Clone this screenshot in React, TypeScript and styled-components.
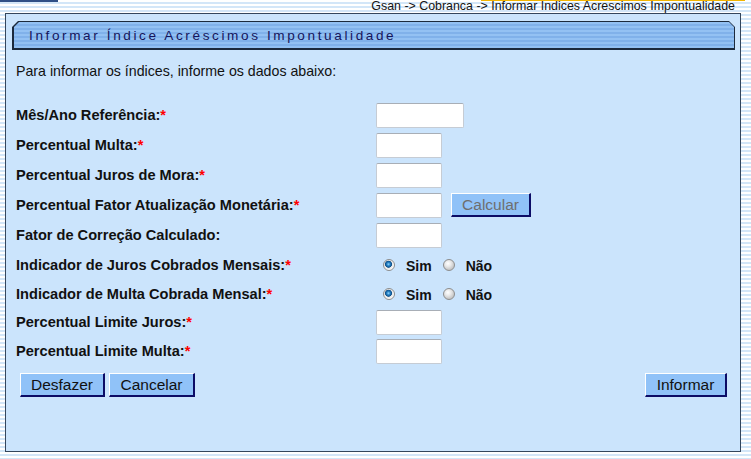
import React from "react";
import styled, { createGlobalStyle } from "styled-components";

const Global = createGlobalStyle`
  html, body { margin: 0; padding: 0; }
  body {
    width: 751px;
    height: 459px;
    overflow: hidden;
    font-family: Arial, "Liberation Sans", sans-serif;
    background: repeating-linear-gradient(to bottom, #ffffff 0 2px, #d3e6f8 2px 4px);
  }
`;

const Page = styled.div`
  display: flex;
  flex-direction: column;
`;

const TopBar = styled.div`
  height: 13px;
  display: flex;
  justify-content: space-between;
  align-items: flex-start;
  overflow: hidden;
`;

const HomeMark = styled.div`
  width: 58px;
  height: 2px;
  background: #2f4f86;
`;

const Breadcrumb = styled.div`
  position: relative;
  font-size: 12.4px;
  line-height: 13px;
  color: #141414;
  padding-right: 16px;
  white-space: nowrap;
  &::before {
    content: "";
    position: absolute;
    top: 0;
    left: 110px;
    right: 6px;
    height: 1px;
    background: #f2b400;
  }
`;

const Panel = styled.div`
  margin-left: 5px;
  width: 736px;
  height: 439px;
  box-sizing: border-box;
  border: 1px solid #34465c;
  background: #cbe4fc;
  padding: 7px 5px 0 6px;
  display: flex;
  flex-direction: column;
`;

const TitleBar = styled.div`
  height: 29px;
  box-sizing: border-box;
  background: #1c2a3d;
  padding: 1px 1px 2px 2px;
  clip-path: polygon(6px 0, calc(100% - 6px) 0, 100% 6px, 100% 100%, 0 100%, 0 6px);
`;

const TitleInner = styled.div`
  height: 100%;
  box-sizing: border-box;
  display: flex;
  align-items: center;
  padding-left: 15px;
  background: repeating-linear-gradient(to bottom, #93c1f3 0 2px, #80b1ea 2px 4px);
  clip-path: polygon(5px 0, calc(100% - 5px) 0, 100% 5px, 100% 100%, 0 100%, 0 5px);
`;

const TitleText = styled.span`
  font-size: 13.6px;
  letter-spacing: 2.6px;
  color: #15155c;
  white-space: nowrap;
`;

const Intro = styled.div`
  margin-top: 13px;
  padding-left: 4px;
  font-size: 14.2px;
  line-height: 16px;
  color: #111;
`;

const Form = styled.div`
  margin-top: 21px;
  padding-left: 4px;
  display: flex;
  flex-direction: column;
`;

const Row = styled.div<{ $h: number }>`
  display: grid;
  grid-template-columns: 360px 1fr;
  align-items: center;
  height: ${(p) => p.$h}px;
`;

const Label = styled.span`
  font-size: 14.6px;
  font-weight: bold;
  color: #111;
  white-space: nowrap;
`;

const Req = styled.span`
  color: #ff0000;
  font-weight: bold;
`;

const Field = styled.div`
  display: flex;
  align-items: center;
`;

const Input = styled.input<{ $w: number }>`
  width: ${(p) => p.$w}px;
  height: 25px;
  box-sizing: border-box;
  border: 1px solid #c6ccd4;
  border-top-color: #a8aeb6;
  border-radius: 2px;
  background: #fff;
  margin: 0;
  padding: 0 3px;
  font-size: 13px;
`;

const Button = styled.button<{ $w: number; $muted?: boolean }>`
  width: ${(p) => p.$w}px;
  height: 24px;
  box-sizing: border-box;
  margin: 0;
  padding: 0;
  font-family: Arial, "Liberation Sans", sans-serif;
  font-size: 15.5px;
  line-height: 20px;
  color: ${(p) => (p.$muted ? "#6e6e6e" : "#111")};
  background: #90c2f8;
  border-style: solid;
  border-width: 1px 2px 2px 1px;
  border-color: #ffffff #0c0c66 #0c0c66 #ffffff;
  cursor: pointer;
`;

const CalcButton = styled(Button)`
  margin-left: 9px;
`;

const RadioGroup = styled.div`
  display: flex;
  align-items: center;
  padding-left: 7px;
`;

const Radio = styled.span<{ $on?: boolean }>`
  width: 12px;
  height: 12px;
  box-sizing: border-box;
  border-radius: 50%;
  border: 1px solid #8d8d8d;
  background: ${(p) =>
    p.$on
      ? "radial-gradient(circle at 45% 42%, #8fd4ff 0, #2a86c8 1.6px, #0d4f8a 3.2px, #e6e6e6 3.8px, #ffffff 6px)"
      : "radial-gradient(circle at 40% 35%, #ffffff 0, #e9e9e9 3px, #c9c9c9 6px)"};
  flex: none;
`;

const RadioText = styled.span`
  font-size: 14px;
  font-weight: bold;
  color: #111;
  margin: 2px 11px 0 11px;
`;

const Actions = styled.div`
  margin-top: 7px;
  padding: 0 8px 0 8px;
  display: flex;
  justify-content: space-between;
  align-items: center;
`;

const ButtonGroup = styled.div`
  display: flex;
  gap: 4px;
`;

type Item =
  | { kind: "input"; label: string; req: boolean; w: number; h: number; calc?: boolean }
  | { kind: "radio"; label: string; h: number };

const items: Item[] = [
  { kind: "input", label: "Mês/Ano Referência:", req: true, w: 88, h: 30 },
  { kind: "input", label: "Percentual Multa:", req: true, w: 66, h: 30 },
  { kind: "input", label: "Percentual Juros de Mora:", req: true, w: 66, h: 30 },
  { kind: "input", label: "Percentual Fator Atualização Monetária:", req: true, w: 66, h: 30, calc: true },
  { kind: "input", label: "Fator de Correção Calculado:", req: false, w: 66, h: 30 },
  { kind: "radio", label: "Indicador de Juros Cobrados Mensais:", h: 30 },
  { kind: "radio", label: "Indicador de Multa Cobrada Mensal:", h: 28 },
  { kind: "input", label: "Percentual Limite Juros:", req: true, w: 66, h: 28 },
  { kind: "input", label: "Percentual Limite Multa:", req: true, w: 66, h: 30 },
];

export default function App() {
  return (
    <Page>
      <Global />
      <TopBar>
        <HomeMark />
        <Breadcrumb>Gsan -&gt; Cobranca -&gt; Informar Indices Acrescimos Impontualidade</Breadcrumb>
      </TopBar>
      <Panel>
        <TitleBar>
          <TitleInner>
            <TitleText>Informar Índice Acréscimos Impontualidade</TitleText>
          </TitleInner>
        </TitleBar>
        <Intro>Para informar os índices, informe os dados abaixo:</Intro>
        <Form>
          {items.map((it) =>
            it.kind === "input" ? (
              <Row key={it.label} $h={it.h}>
                <Label>
                  {it.label}
                  {it.req && <Req>*</Req>}
                </Label>
                <Field>
                  <Input $w={it.w} />
                  {it.calc && (
                    <CalcButton $w={80} $muted>
                      Calcular
                    </CalcButton>
                  )}
                </Field>
              </Row>
            ) : (
              <Row key={it.label} $h={it.h}>
                <Label>
                  {it.label}
                  <Req>*</Req>
                </Label>
                <RadioGroup>
                  <Radio $on />
                  <RadioText>Sim</RadioText>
                  <Radio />
                  <RadioText>Não</RadioText>
                </RadioGroup>
              </Row>
            )
          )}
        </Form>
        <Actions>
          <ButtonGroup>
            <Button $w={85}>Desfazer</Button>
            <Button $w={86}>Cancelar</Button>
          </ButtonGroup>
          <Button $w={82}>Informar</Button>
        </Actions>
      </Panel>
    </Page>
  );
}
